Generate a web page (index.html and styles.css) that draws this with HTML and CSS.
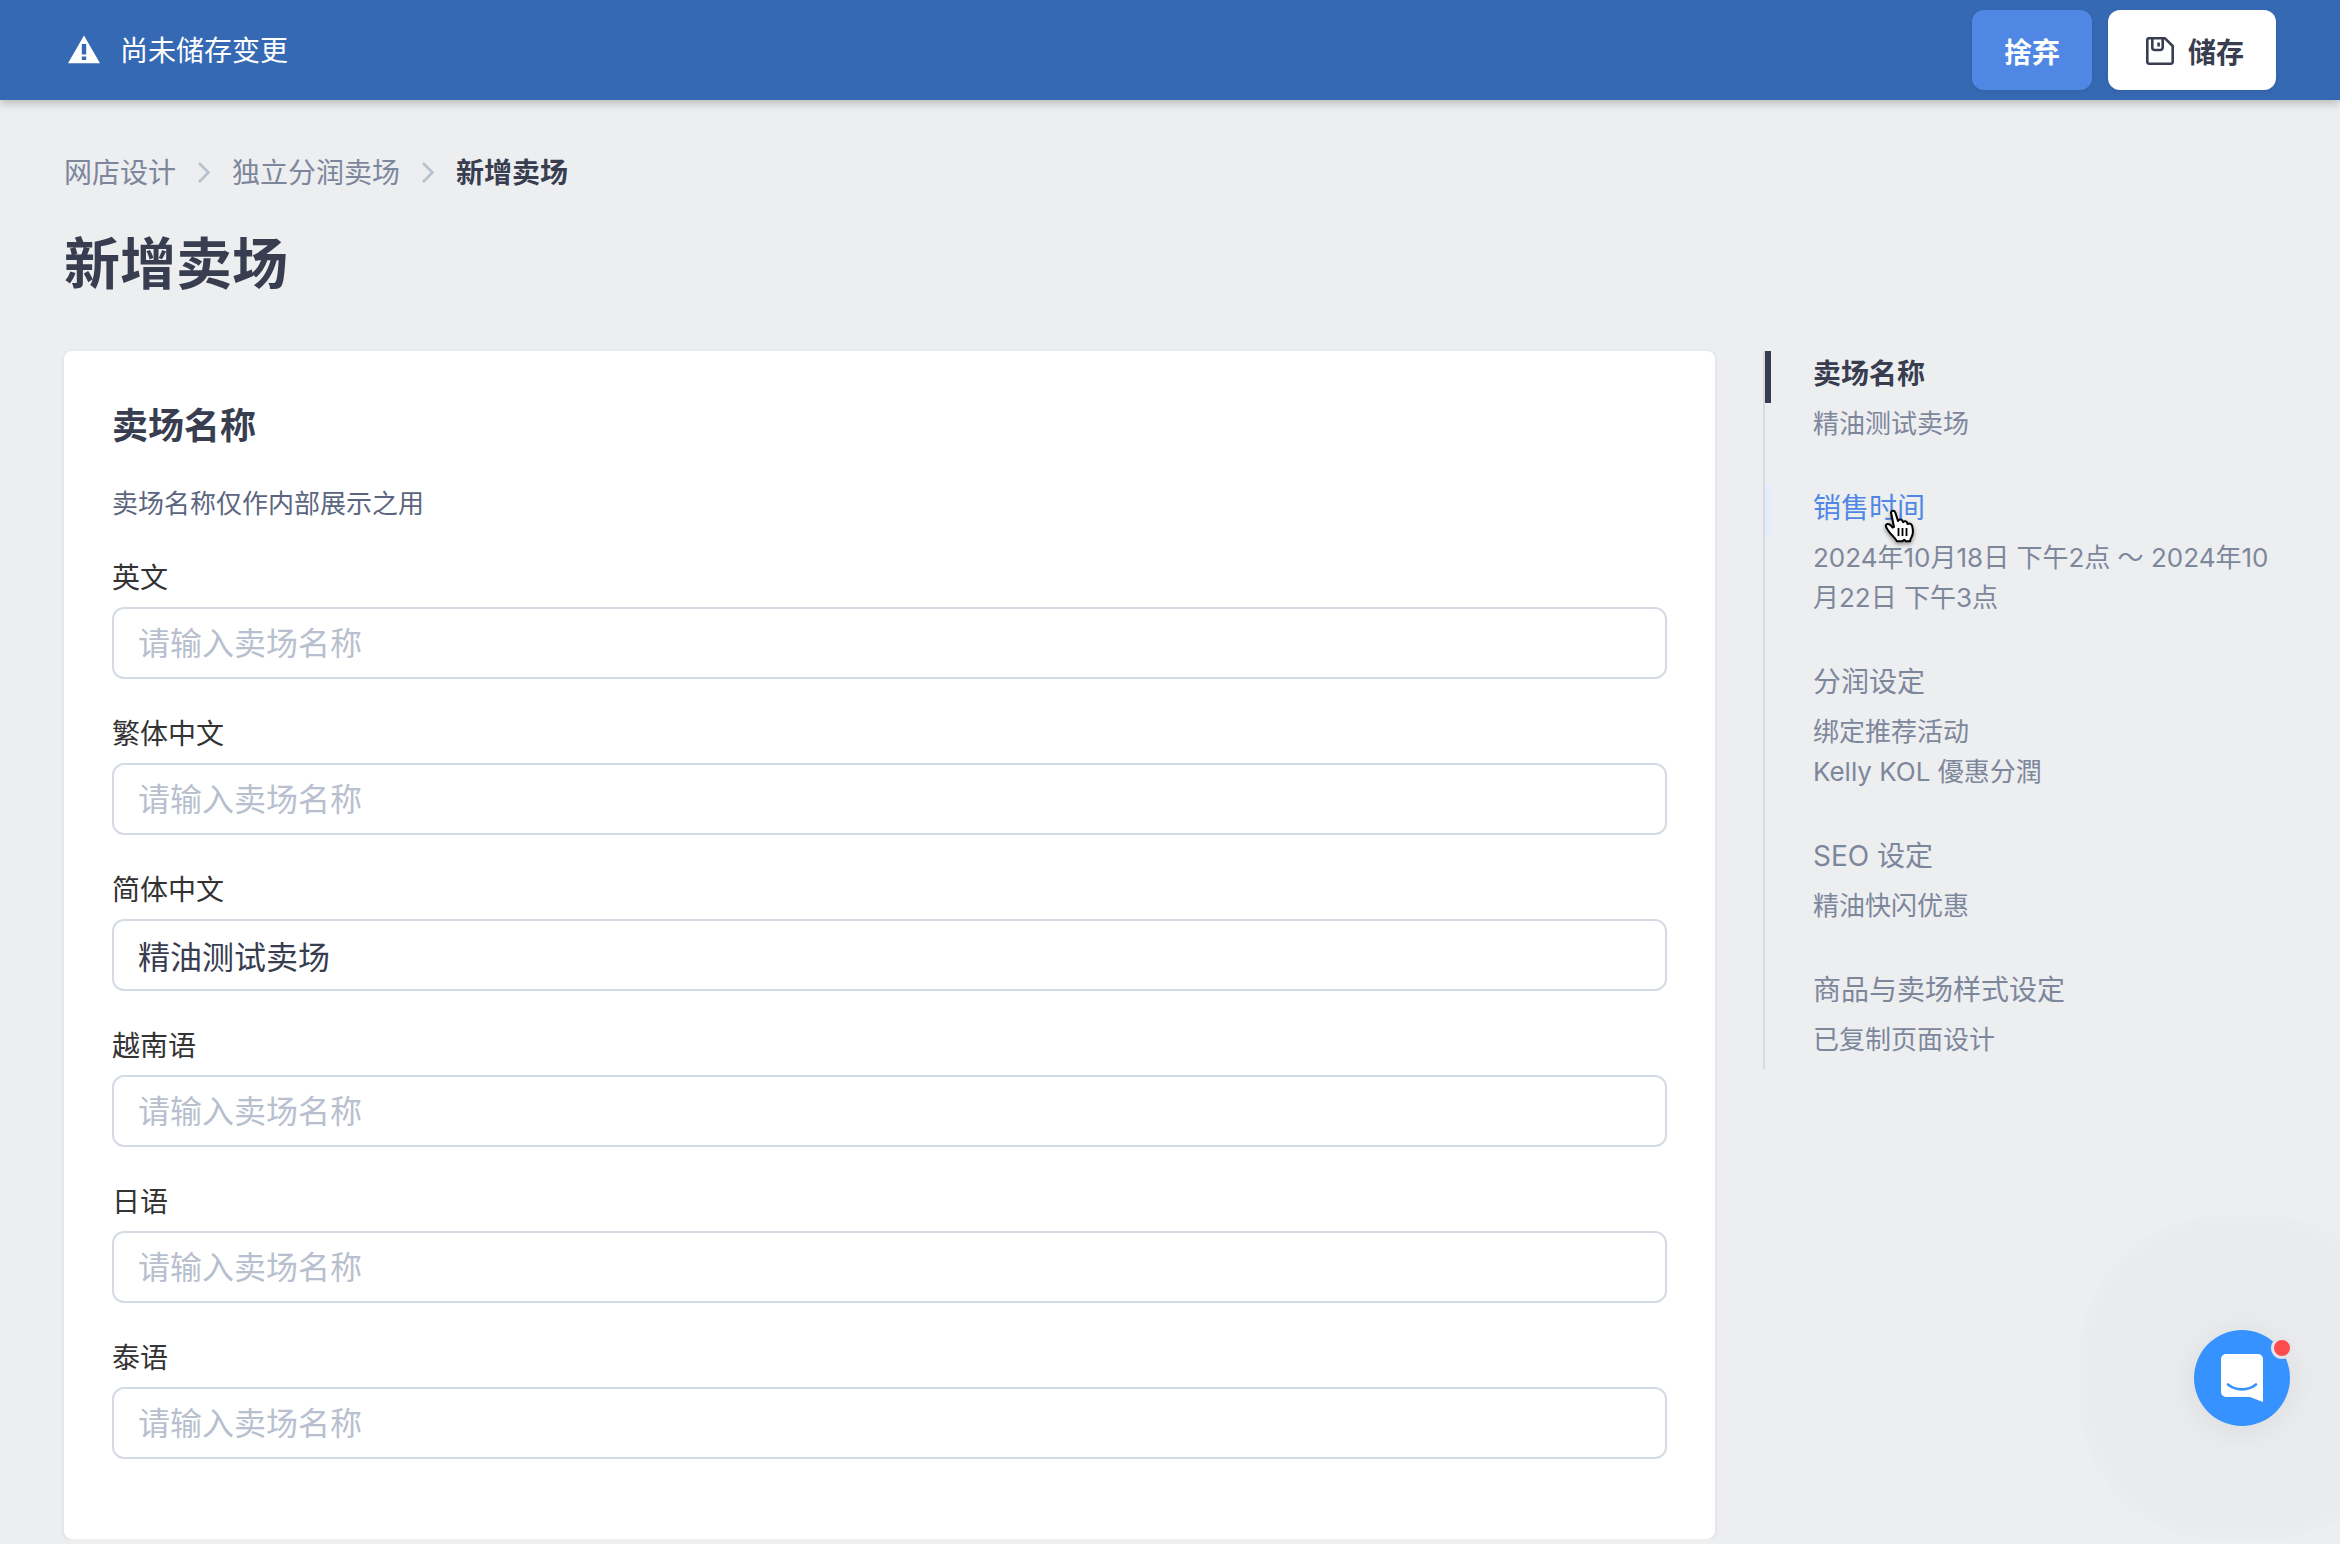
FILE: index.html
```html
<!DOCTYPE html>
<html lang="zh-CN">
<head>
    <meta charset="UTF-8">
    <title>新增卖场</title>
    <meta name="viewport" content="width=device-width, initial-scale=1.0">
    <link rel="stylesheet" href="styles.css">
</head>
<body>
<header class="save-bar">
    <div class="save-bar-message">
        <svg class="icon" viewBox="0 0 40 40" aria-hidden="true">
            <path fill="#fff" fill-rule="evenodd" d="M20 4.500 4 32.200h32zM17.800 13h4.400v10.500h-4.400zM17.800 25.500h4.400v3.500h-4.400z"/>
        </svg>
        <span>尚未储存变更</span>
    </div>
    <div class="save-bar-actions">
        <button type="button" class="button primary">捨弃</button>
        <button type="submit" form="market-form" class="button">
            <svg class="icon" viewBox="0 0 40 40" fill="none" stroke="#383d50" stroke-width="2.600" stroke-linejoin="round" aria-hidden="true">
                <path d="M8.500 7.300H25L32.700 15V31a1.700 1.700 0 0 1-1.700 1.700H9A1.700 1.700 0 0 1 7.300 31V9a1.700 1.700 0 0 1 1.200-1.700z"/>
                <path d="M12.300 7.500V16.500a2.500 2.500 0 0 0 2.500 2.500h5.400a2.500 2.500 0 0 0 2.500-2.500V7.500"/>
                <path d="M18.600 11.500v4"/>
            </svg>
            <span>储存</span>
        </button>
    </div>
</header>

<main class="page">
    <nav class="breadcrumb" aria-label="breadcrumb">
        <a href="#">网店设计</a>
        <svg viewBox="0 0 24 24" aria-hidden="true"><path d="m7 2 9.500 9.500L7 21"/></svg>
        <a href="#">独立分润卖场</a>
        <svg viewBox="0 0 24 24" aria-hidden="true"><path d="m7 2 9.500 9.500L7 21"/></svg>
        <strong>新增卖场</strong>
    </nav>
    <h1>新增卖场</h1>

    <div class="columns">
        <form id="market-form" class="card">
            <h2>卖场名称</h2>
            <p class="hint">卖场名称仅作内部展示之用</p>
            <div class="field">
                <label for="name_en">英文</label>
                <input type="text" id="name_en" placeholder="请输入卖场名称">
            </div>
            <div class="field">
                <label for="name_hant">繁体中文</label>
                <input type="text" id="name_hant" placeholder="请输入卖场名称">
            </div>
            <div class="field">
                <label for="name_hans">简体中文</label>
                <input type="text" id="name_hans" placeholder="请输入卖场名称" value="精油测试卖场">
            </div>
            <div class="field">
                <label for="name_vi">越南语</label>
                <input type="text" id="name_vi" placeholder="请输入卖场名称">
            </div>
            <div class="field">
                <label for="name_ja">日语</label>
                <input type="text" id="name_ja" placeholder="请输入卖场名称">
            </div>
            <div class="field">
                <label for="name_th">泰语</label>
                <input type="text" id="name_th" placeholder="请输入卖场名称">
            </div>
        </form>

        <nav class="steps">
            <div class="step">
                <a href="#" class="step-title active">卖场名称</a>
                <p>精油测试卖场</p>
            </div>
            <div class="step">
                <a href="#" class="step-title hover">销售时间
                    <svg class="pointer" viewBox="0 0 32 36" aria-hidden="true">
                        <path fill="#fff" stroke="#000" stroke-width="2" stroke-linejoin="round" d="M7 3.500C7.500 1.200 10.500 1.200 11.300 3.500L14 12c.5-2 4-2 4.700.3l.3 1c.8-1.700 3.700-1.300 4.300.8l.3 1c1.500-1.200 3.800-.5 4.400 1.500 1.200 4.400 1.400 8.400-.4 11.400-1 1.800-1.600 2.200-1.400 4.200h-4.400l-1.600-1.500-1.800 1.500h-5.600c-1.800-4-5.800-6.200-8.300-10.200-1.500-2.500-3.500-4.500-2.500-6 1.500-2 4.500-1 6.500 2.500L10 18z"/>
                        <path fill="none" stroke="#000" stroke-width="1.800" d="M14.500 19v8M18.500 19v8M22.500 19v8"/>
                    </svg>
                </a>
                <p>2024年10月18日 下午2点 ～ 2024年10月22日 下午3点</p>
            </div>
            <div class="step">
                <a href="#" class="step-title">分润设定</a>
                <p>绑定推荐活动<br>Kelly KOL 優惠分潤</p>
            </div>
            <div class="step">
                <a href="#" class="step-title">SEO 设定</a>
                <p>精油快闪优惠</p>
            </div>
            <div class="step">
                <a href="#" class="step-title">商品与卖场样式设定</a>
                <p>已复制页面设计</p>
            </div>
        </nav>
    </div>
</main>

<button type="button" class="chat" aria-label="chat">
    <svg viewBox="0 0 42 48" aria-hidden="true">
        <path fill="#fff" d="M5 0h32a5 5 0 0 1 5 5v43l-13-5H5a5 5 0 0 1-5-5V5a5 5 0 0 1 5-5z"/>
        <path fill="none" stroke="#3592fe" stroke-width="2.600" stroke-linecap="round" d="M7 30.500c8 6.500 20 6.500 28 0"/>
    </svg>
    <span class="chat-badge"></span>
</button>
</body>
</html>
```
FILE: styles.css
```css
* {
    box-sizing: border-box;
}
body {
    margin: 0;
    background-color: #edeef0;
    color: #383d50;
    font-family: Inter, 'Noto Sans CJK SC', sans-serif;
    font-size: 28px;
    line-height: 46px;
}
h1, h2, p {
    margin: 0;
}
a {
    color: inherit;
    text-decoration: none;
}
.icon {
    width: 40px;
    height: 40px;
}

/* top bar */
.save-bar {
    display: flex;
    justify-content: space-between;
    align-items: center;
    height: 100px;
    padding: 0 64px;
    background-color: #3669b4;
    box-shadow: 0 4px 8px rgba(0, 0, 0, 0.2);
}
.save-bar-message {
    display: flex;
    align-items: center;
    gap: 16px;
    padding-top: 2px;
    color: #ffffff;
}
.save-bar-actions {
    display: flex;
    gap: 16px;
}
.button {
    display: flex;
    align-items: center;
    gap: 8px;
    height: 80px;
    padding: 2px 32px 0;
    border: none;
    border-radius: 12px;
    background-color: #ffffff;
    box-shadow: 0 2px 4px rgba(0, 0, 0, 0.08);
    color: #383d50;
    font-family: inherit;
    font-size: 28px;
    font-weight: 700;
    cursor: pointer;
}
.button.primary {
    background-color: #5087e5;
    color: #ffffff;
}

/* page */
.page {
    padding: 50px 64px 0;
}
.breadcrumb {
    display: flex;
    align-items: center;
    gap: 16px;
    color: #7d879c;
}
.breadcrumb svg {
    width: 24px;
    height: 24px;
    fill: none;
    stroke: #b8bfce;
    stroke-width: 2.5;
}
.breadcrumb strong {
    color: #383d50;
}
h1 {
    margin: 32px 0 51px;
    font-size: 56px;
    font-weight: 700;
    line-height: 72px;
}
.columns {
    display: flex;
    align-items: flex-start;
    gap: 48px;
}
.card {
    flex: 1;
    padding: 48px;
    border-radius: 8px;
    background-color: #ffffff;
    box-shadow: 0 1px 4px rgba(0, 0, 0, 0.1);
}
h2 {
    font-size: 36px;
    font-weight: 700;
    line-height: 54px;
}
.hint {
    margin: 31px 0;
    color: #5b6580;
    font-size: 26px;
    line-height: 40px;
}
.field {
    margin-bottom: 32px;
}
.field label {
    display: block;
    margin-bottom: 6px;
    color: #333333;
}
.field input {
    display: block;
    width: 100%;
    height: 72px;
    padding: 0 24px;
    border: 2px solid #d5dbe4;
    border-radius: 12px;
    background-color: #ffffff;
    color: #383d50;
    font-family: inherit;
    font-size: 32px;
    line-height: 48px;
}
.field input::placeholder {
    color: #b8bfce;
    opacity: 1;
}

/* side steps */
.steps {
    display: flex;
    flex-direction: column;
    gap: 32px;
    width: 513px;
    border-left: 2px solid #d5dbe4;
    color: #7d879c;
}
.step {
    padding-bottom: 9px;
}
.step-title {
    display: block;
    position: relative;
    height: 52px;
    margin-bottom: 1px;
    padding-left: 42px;
    border-left: 6px solid transparent;
}
.step-title.active {
    border-left-color: #383d50;
    color: #383d50;
    font-weight: 700;
}
.step-title.hover {
    border-left-color: #e4edfc;
    color: #5087e5;
}
.step p {
    padding-left: 48px;
    font-size: 26px;
    line-height: 40px;
}
.pointer {
    position: absolute;
    top: 24px;
    left: 113px;
    width: 32px;
    height: 36px;
    filter: drop-shadow(0 2px 2px rgba(0, 0, 0, 0.4));
}

/* chat launcher */
.chat {
    position: fixed;
    right: 50px;
    bottom: 118px;
    display: flex;
    justify-content: center;
    align-items: center;
    width: 96px;
    height: 96px;
    padding: 0;
    border: none;
    border-radius: 50%;
    background-color: #3592fe;
    box-shadow: 0 4px 40px rgba(0, 0, 0, 0.08), 0 0 6px 114px rgba(0, 0, 0, 0.01);
    cursor: pointer;
}
.chat svg {
    width: 42px;
    height: 48px;
}
.chat-badge {
    position: absolute;
    top: 7px;
    right: -3px;
    width: 22px;
    height: 22px;
    border: 3px solid #e4e5e8;
    border-radius: 50%;
    background-color: #fe4c4c;
}
```
